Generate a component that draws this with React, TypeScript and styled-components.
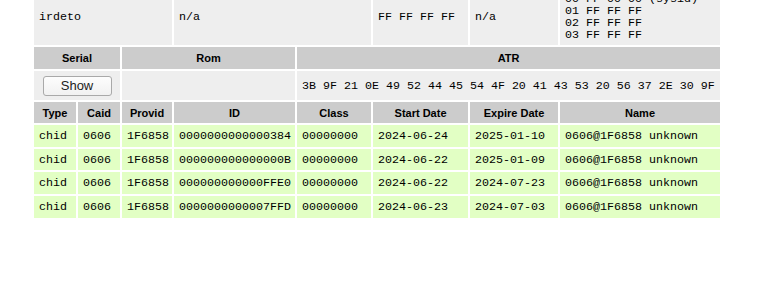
import React from 'react';
import styled, { createGlobalStyle } from 'styled-components';

const GlobalStyle = createGlobalStyle`
  html, body {
    margin: 0;
    padding: 0;
    background: #ffffff;
  }
  body {
    font-family: "Liberation Sans", Arial, sans-serif;
    overflow: hidden;
  }
`;

const Page = styled.div`
  padding-left: 32px;
  margin-top: -13px;
`;

const Table = styled.table`
  table-layout: fixed;
  width: 690px;
  border-collapse: separate;
  border-spacing: 2px;
`;

const Col = styled.col<{ $w: number }>`
  width: ${(p) => p.$w}px;
`;

const Cell = styled.td<{ $tone?: 'plain' | 'valid' }>`
  box-sizing: border-box;
  padding: 0 5px;
  background: ${(p) => (p.$tone === 'valid' ? '#e2ffc4' : '#eeeeee')};
  font-family: "Liberation Mono", "Courier New", monospace;
  font-size: 11.67px;
  color: #000;
  white-space: nowrap;
  overflow: hidden;
  vertical-align: middle;
`;

const InfoCell = styled(Cell)`
  height: 55px;
  line-height: 12px;
  padding-top: 4px;
  padding-bottom: 4px;
`;

const Head = styled.th<{ $h?: number }>`
  box-sizing: border-box;
  height: ${(p) => p.$h ?? 22}px;
  padding: 0 4px;
  background: #cccccc;
  font-family: "Liberation Sans", Arial, sans-serif;
  font-weight: bold;
  font-size: 11px;
  color: #000;
  text-align: center;
  white-space: nowrap;
`;

const ButtonCell = styled(Cell)`
  height: 29px;
  text-align: center;
`;

const DataRow = styled.tr`
  height: 21.7px;
`;

const ShowButton = styled.button`
  width: 69px;
  height: 20px;
  padding: 0;
  border: 1px solid #a9a9a9;
  border-radius: 3px;
  background: linear-gradient(#fdfdfd, #f1f1f1);
  font-family: "Liberation Sans", Arial, sans-serif;
  font-size: 13px;
  color: #222;
  cursor: pointer;
`;

const Lines = styled.div`
  white-space: pre;
`;

type Entitlement = {
  type: string;
  caid: string;
  provid: string;
  id: string;
  cls: string;
  start: string;
  expire: string;
  name: string;
};

const entitlements: Entitlement[] = [
  { type: 'chid', caid: '0606', provid: '1F6858', id: '0000000000000384', cls: '00000000', start: '2024-06-24', expire: '2025-01-10', name: '0606@1F6858 unknown' },
  { type: 'chid', caid: '0606', provid: '1F6858', id: '000000000000000B', cls: '00000000', start: '2024-06-22', expire: '2025-01-09', name: '0606@1F6858 unknown' },
  { type: 'chid', caid: '0606', provid: '1F6858', id: '000000000000FFE0', cls: '00000000', start: '2024-06-22', expire: '2024-07-23', name: '0606@1F6858 unknown' },
  { type: 'chid', caid: '0606', provid: '1F6858', id: '0000000000007FFD', cls: '00000000', start: '2024-06-23', expire: '2024-07-03', name: '0606@1F6858 unknown' },
];

const widths = [42, 42, 50, 121, 74, 95, 88, 160];
const columns = ['Type', 'Caid', 'Provid', 'ID', 'Class', 'Start Date', 'Expire Date', 'Name'];

export default function App() {
  return (
    <>
      <GlobalStyle />
      <Page>
        <Table>
          <colgroup>
            {widths.map((w, i) => (
              <Col key={i} $w={w} />
            ))}
          </colgroup>
          <tbody>
            <tr>
              <InfoCell colSpan={3}>irdeto</InfoCell>
              <InfoCell colSpan={2}>n/a</InfoCell>
              <InfoCell>FF FF FF FF</InfoCell>
              <InfoCell>n/a</InfoCell>
              <InfoCell>
                <Lines>{'00 FF 00 00 (sysid)\n01 FF FF FF\n02 FF FF FF\n03 FF FF FF'}</Lines>
              </InfoCell>
            </tr>
            <tr>
              <Head colSpan={2}>Serial</Head>
              <Head colSpan={2}>Rom</Head>
              <Head colSpan={4}>ATR</Head>
            </tr>
            <tr>
              <ButtonCell colSpan={2}>
                <ShowButton type="button">Show</ShowButton>
              </ButtonCell>
              <Cell colSpan={2}></Cell>
              <Cell colSpan={4}>3B 9F 21 0E 49 52 44 45 54 4F 20 41 43 53 20 56 37 2E 30 9F</Cell>
            </tr>
            <tr>
              {columns.map((c) => (
                <Head key={c} $h={21}>{c}</Head>
              ))}
            </tr>
            {entitlements.map((e, i) => (
              <DataRow key={i}>
                <Cell $tone="valid">{e.type}</Cell>
                <Cell $tone="valid">{e.caid}</Cell>
                <Cell $tone="valid">{e.provid}</Cell>
                <Cell $tone="valid">{e.id}</Cell>
                <Cell $tone="valid">{e.cls}</Cell>
                <Cell $tone="valid">{e.start}</Cell>
                <Cell $tone="valid">{e.expire}</Cell>
                <Cell $tone="valid">{e.name}</Cell>
              </DataRow>
            ))}
          </tbody>
        </Table>
      </Page>
    </>
  );
}
